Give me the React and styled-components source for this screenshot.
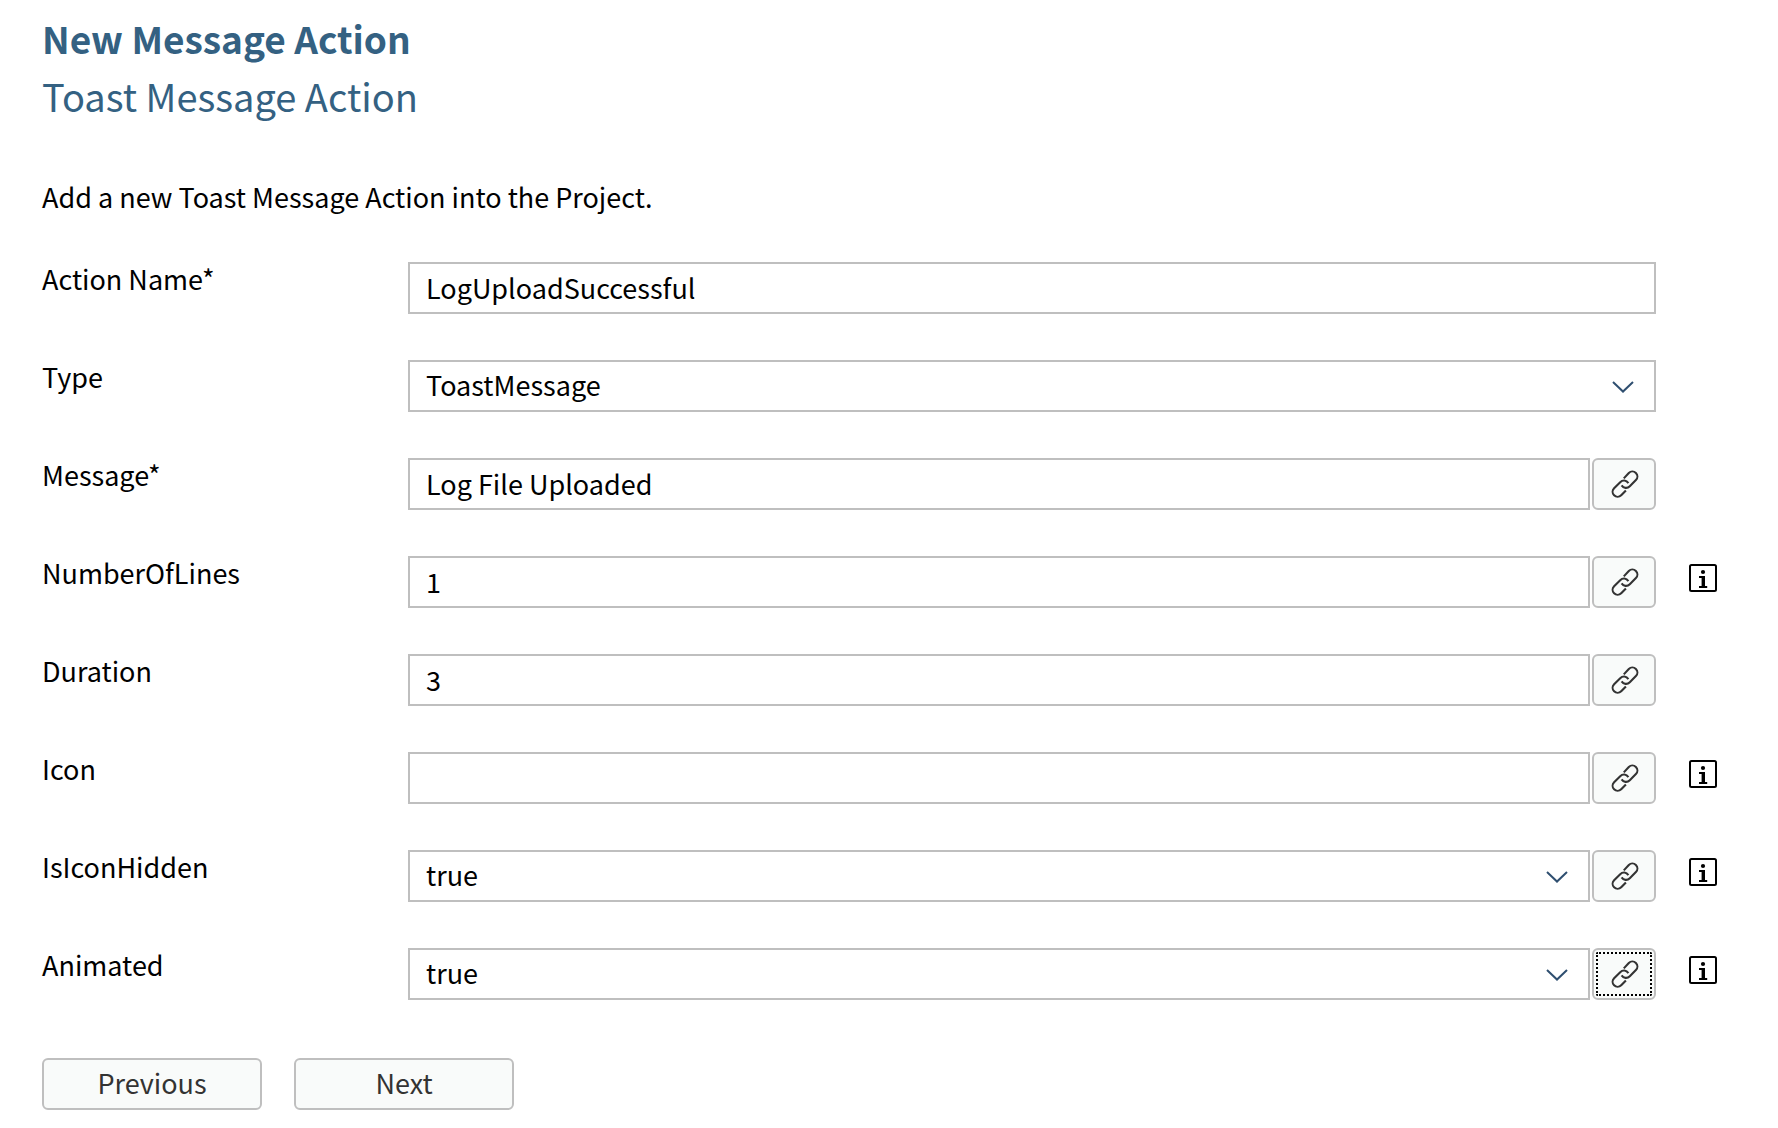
import React from 'react';
import styled, { createGlobalStyle, css } from 'styled-components';

const GlobalStyle = createGlobalStyle`
  *, *::before, *::after { box-sizing: border-box; }
  body {
    margin: 0;
    background: #fff;
    color: #000;
    font-family: "Noto Sans CJK SC", "Noto Sans", sans-serif;
    font-size: 27px;
    line-height: 36px;
  }
`;

const Page = styled.main`
  padding: 12px 61px 16px 42px;
`;

const Title = styled.h1`
  margin: 0;
  color: #346182;
  font-size: 37px;
  font-weight: 700;
  line-height: 52px;
`;

const Subtitle = styled.h2`
  margin: 0;
  color: #346182;
  font-size: 38px;
  font-weight: 400;
  line-height: 64px;
`;

const Intro = styled.p`
  margin: 51px 0 47px;
`;

const Form = styled.form`
  display: flex;
  flex-direction: column;
  gap: 46px;
`;

const Row = styled.div`
  display: grid;
  grid-template-columns: 366px minmax(0, 1fr) 28px;
  align-items: start;
`;

const Label = styled.label`
  line-height: 34px;
`;

const Controls = styled.div`
  display: flex;
  gap: 2px;
  margin-right: 33px;
`;

const field = css`
  width: 100%;
  height: 52px;
  margin: 0;
  padding: 0 16px 2px;
  border: 2px solid #bfbfbf;
  border-radius: 0;
  background: #fff;
  color: #000;
  font: inherit;
  outline: none;
`;

const TextInput = styled.input`
  ${field}
`;

const SelectBox = styled.div`
  display: grid;
  flex: 1;
  align-items: center;

  > * { grid-area: 1 / 1; }
`;

const Select = styled.select`
  ${field}
  appearance: none;
`;

const Chevron = styled.svg`
  justify-self: end;
  margin: 2px 22px 0 0;
  pointer-events: none;
`;

const Button = styled.button`
  display: flex;
  align-items: center;
  justify-content: center;
  flex: none;
  width: ${(p) => p.$width}px;
  height: 52px;
  padding: 0 0 2px;
  border: 2px solid #bfbfbf;
  border-radius: 6px;
  background: #f9fbfa;
  color: #333;
  font: inherit;
  outline: ${(p) => (p.$focused ? '2px dotted #000' : 'none')};
  outline-offset: -6px;
`;

const InfoButton = styled.button`
  width: 28px;
  height: 28px;
  margin-top: 8px;
  padding: 0;
  border: 0;
  background: none;
  color: #000;

  svg { display: block; }
`;

const Footer = styled.footer`
  display: flex;
  gap: 32px;
  margin-top: 12px;
`;

const LinkIcon = () => (
  <svg width="30" height="30" viewBox="-2 -1 30 30" fill="none" stroke="currentColor" strokeWidth="2.1" aria-hidden="true">
    <path d="M12.8 9.4 17.8 4a4.9 4.9 0 0 1 7.1 7.100L18.8 17.200c-2.600 2.600-6.200 2.100-8.200-.9" />
    <path d="M14.900 21.400 10.200 26.300a4.900 4.900 0 0 1-7.100-7.100L9.200 13.200c2.600-2.600 6.200-2.100 8.200.9" />
  </svg>
);

const InfoIcon = () => (
  <svg width="28" height="28" viewBox="0 0 28 28" fill="currentColor" aria-hidden="true">
    <rect x="1" y="1" width="26" height="26" rx="1.500" fill="none" stroke="currentColor" strokeWidth="2" />
    <circle cx="14" cy="8" r="2.100" />
    <path d="M10 12h6v10h2.200v2H10v-2h2.600v-8H10z" />
  </svg>
);

const fields = [
  { id: 'actionName', label: 'Action Name*', value: 'LogUploadSuccessful' },
  { id: 'type', label: 'Type', value: 'ToastMessage', options: ['ToastMessage'] },
  { id: 'message', label: 'Message*', value: 'Log File Uploaded', link: true },
  { id: 'numberOfLines', label: 'NumberOfLines', value: '1', link: true, info: true },
  { id: 'duration', label: 'Duration', value: '3', link: true },
  { id: 'icon', label: 'Icon', value: '', link: true, info: true },
  { id: 'isIconHidden', label: 'IsIconHidden', value: 'true', options: ['true', 'false'], link: true, info: true },
  { id: 'animated', label: 'Animated', value: 'true', options: ['true', 'false'], link: true, info: true, focused: true },
];

function Field({ id, label, value, options, link, info, focused }) {
  return (
    <Row>
      <Label htmlFor={id}>{label}</Label>
      <Controls>
        {options ? (
          <SelectBox>
            <Select id={id} defaultValue={value}>
              {options.map((o) => <option key={o}>{o}</option>)}
            </Select>
            <Chevron width="22" height="12" viewBox="0 0 22 12" fill="none" stroke="#2f4f70" strokeWidth="2" aria-hidden="true">
              <path d="M1 1l10 9.500L21 1" />
            </Chevron>
          </SelectBox>
        ) : (
          <TextInput id={id} type="text" defaultValue={value} />
        )}
        {link && (
          <Button type="button" $width={64} $focused={focused} aria-label={`Bind ${label}`}>
            <LinkIcon />
          </Button>
        )}
      </Controls>
      {info && (
        <InfoButton type="button" aria-label={`About ${label}`}>
          <InfoIcon />
        </InfoButton>
      )}
    </Row>
  );
}

export default function App() {
  return (
    <>
      <GlobalStyle />
      <Page>
        <header>
          <Title>New Message Action</Title>
          <Subtitle>Toast Message Action</Subtitle>
        </header>
        <Intro>Add a new Toast Message Action into the Project.</Intro>
        <Form onSubmit={(e) => e.preventDefault()}>
          {fields.map((f) => <Field key={f.id} {...f} />)}
          <Footer>
            <Button type="button" $width={220}>Previous</Button>
            <Button type="submit" $width={220}>Next</Button>
          </Footer>
        </Form>
      </Page>
    </>
  );
}
